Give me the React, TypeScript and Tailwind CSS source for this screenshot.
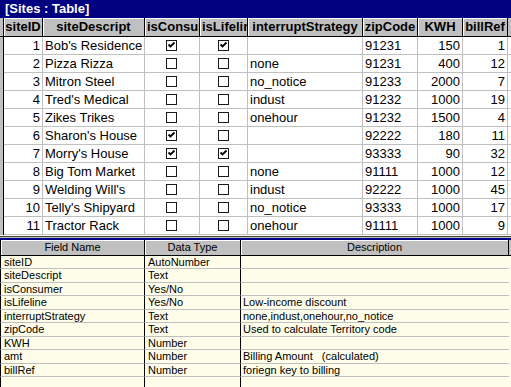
import React from "react";

type Row = [number, string, boolean, boolean, string, string, number, number];

const rows: Row[] = [
  [1, "Bob's Residence", true, true, "", "91231", 150, 1],
  [2, "Pizza Rizza", false, false, "none", "91231", 400, 12],
  [3, "Mitron Steel", false, false, "no_notice", "91233", 2000, 7],
  [4, "Tred's Medical", false, false, "indust", "91232", 1000, 19],
  [5, "Zikes Trikes", false, false, "onehour", "91232", 1500, 4],
  [6, "Sharon's House", true, false, "", "92222", 180, 11],
  [7, "Morry's House", true, true, "", "93333", 90, 32],
  [8, "Big Tom Market", false, false, "none", "91111", 1000, 12],
  [9, "Welding Will's", false, false, "indust", "92222", 1000, 45],
  [10, "Telly's Shipyard", false, false, "no_notice", "93333", 1000, 17],
  [11, "Tractor Rack", false, false, "onehour", "91111", 1000, 9],
];

const fields = [
  ["siteID", "AutoNumber", ""],
  ["siteDescript", "Text", ""],
  ["isConsumer", "Yes/No", ""],
  ["isLifeline", "Yes/No", "Low-income discount"],
  ["interruptStrategy", "Text", "none,indust,onehour,no_notice"],
  ["zipCode", "Text", "Used to calculate Territory code"],
  ["KWH", "Number", ""],
  ["amt", "Number", "Billing Amount   (calculated)"],
  ["billRef", "Number", "foriegn key to billing"],
  ["", "", ""],
];

const Check = ({ on }: { on: boolean }) => (
  <svg width="11" height="11" viewBox="0 0 11 11" shapeRendering="crispEdges">
    <rect x="0.5" y="0.5" width="10" height="10" fill="#fff" stroke="#1a1a1a" />
    {on && (
      <path d="M2.5 4.5 L4.5 6.5 L8.5 2.5" stroke="#000" strokeWidth="1.8" fill="none" shapeRendering="auto" />
    )}
  </svg>
);

const hd = "h-full flex items-center border-r border-black shadow-[inset_1px_1px_0_#fff] overflow-hidden whitespace-nowrap";
const cell = "h-full flex items-center border-r border-b border-[#c0c0c0] overflow-hidden whitespace-nowrap";

export default function App() {
  return (
    <div className="w-[511px] h-[387px] bg-white overflow-hidden font-['Liberation_Sans',Arial,sans-serif] text-black">
      {/* title */}
      <div className="h-[18px] bg-[#000080] text-white font-bold text-[13px] leading-[18px] pl-[5px]">[Sites : Table]</div>

      {/* datasheet header */}
      <div className="flex h-[19px] bg-[#c0c0c0] border-b border-black font-bold text-[13px]">
        <div className="w-[4px] h-full border-r border-black" />
        <div className={`${hd} w-[39px] justify-center`}>siteID</div>
        <div className={`${hd} w-[102px] justify-center`}>siteDescript</div>
        <div className={`${hd} w-[55px] pl-[2px]`}>isConsumer</div>
        <div className={`${hd} w-[48px] pl-[2px]`}>isLifeline</div>
        <div className={`${hd} w-[115px] justify-center`}>interruptStrategy</div>
        <div className={`${hd} w-[55px] justify-center`}>zipCode</div>
        <div className={`${hd} w-[45px] justify-center`}>KWH</div>
        <div className={`${hd} w-[45px] justify-center`}>billRef</div>
        <div className="flex-1" />
      </div>

      {/* datasheet rows */}
      {rows.map((r) => (
        <div key={r[0]} className="flex h-[18px] text-[13px]">
          <div className="w-[4px] h-full bg-[#c0c0c0] border-r border-black" />
          <div className={`${cell} w-[39px] justify-end pr-[2px]`}>{r[0]}</div>
          <div className={`${cell} w-[102px] pl-[2px]`}>{r[1]}</div>
          <div className={`${cell} w-[55px] justify-center pr-[2px]`}><Check on={r[2]} /></div>
          <div className={`${cell} w-[48px] justify-center pr-[1px]`}><Check on={r[3]} /></div>
          <div className={`${cell} w-[115px] pl-[2px]`}>{r[4]}</div>
          <div className={`${cell} w-[55px] pl-[2px]`}>{r[5]}</div>
          <div className={`${cell} w-[45px] justify-end pr-[2px]`}>{r[6]}</div>
          <div className={`${cell} w-[45px] justify-end pr-[2px]`}>{r[7]}</div>
          <div className="flex-1 h-full border-b border-[#c0c0c0]" />
        </div>
      ))}

      {/* splitter */}
      <div className="h-[1px] bg-white" />
      <div className="h-[1px] bg-[#404040]" />
      <div className="h-[1px] bg-[#c0c0c0]" />
      <div className="h-[2px] bg-[#000080]" />

      {/* design grid header */}
      <div className="flex h-[16px] bg-[#c0c0c0] text-[11px] border-b border-black">
        <div className="w-[145px] h-full flex items-center justify-center border-x border-black shadow-[inset_1px_1px_0_#fff]">Field Name</div>
        <div className="w-[96px] h-full flex items-center justify-center border-r border-black shadow-[inset_1px_1px_0_#fff]">Data Type</div>
        <div className="w-[268px] h-full flex items-center justify-center border-r border-black shadow-[inset_1px_1px_0_#fff]">Description</div>
      </div>

      {/* design grid rows */}
      <div className="bg-[#fdfde9] h-[131px] text-[11px]">
        {fields.map((f, i) => (
          <div key={i} className={`flex ${i % 2 ? "h-[14px]" : "h-[13px]"}`}>
            <div className="w-[145px] h-full flex items-center pl-[3px] border-x border-black border-b border-b-[#c0c0c0]">{f[0]}</div>
            <div className="w-[96px] h-full flex items-center pl-[3px] border-r border-black border-b border-b-[#c0c0c0]">{f[1]}</div>
            <div className="w-[268px] h-full flex items-center pl-[2px] border-b border-[#c0c0c0] whitespace-pre">{f[2]}</div>
          </div>
        ))}
      </div>
    </div>
  );
}
